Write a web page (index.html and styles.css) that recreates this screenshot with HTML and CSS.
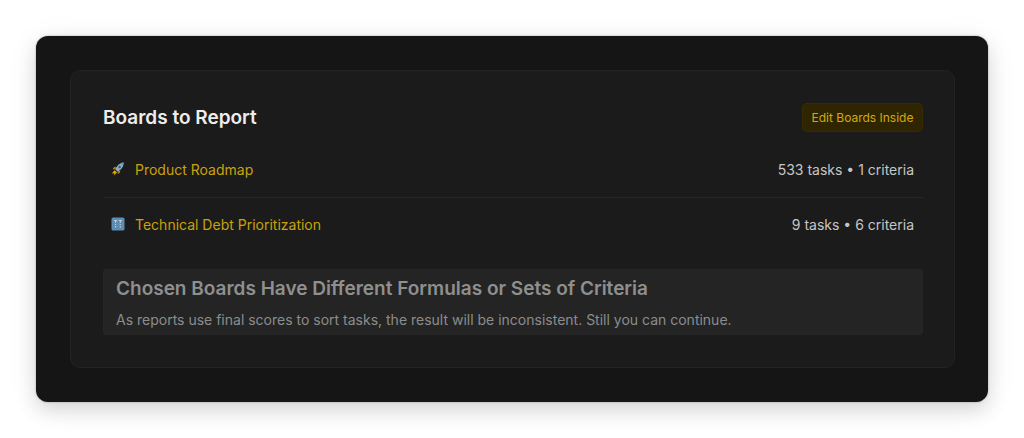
FILE: index.html
```html
<!DOCTYPE html>
<html lang="en">
<head>
<meta charset="utf-8">
<title>Boards to Report</title>
<link rel="stylesheet" href="styles.css">
</head>
<body>
<main class="window">
  <section class="card">
    <header class="card-head">
      <h2 class="card-title">Boards to Report</h2>
      <button class="edit-btn" type="button">Edit Boards Inside</button>
    </header>
    <ul class="boards">
      <li class="board">
        <span class="board-name">
          <svg class="board-icon" viewBox="0 0 16 16" aria-hidden="true">
            <path d="M13.6 1.6c-2.6.2-5 1.6-6.6 3.8L5 8l2.6 2.8 2.8-2c2.2-1.6 3.4-4.4 3.2-7.2z" fill="#8fa9bd"/>
            <path d="M13.6 1.6c-1 .1-2 .3-2.8.8l2 2.2c.6-.9.8-2 .8-3z" fill="#5f95c9"/>
            <circle cx="9.6" cy="6" r="1.2" fill="#2f5f8a"/>
            <path d="M6 5.6 3.6 6.4 2.8 8.4 5.2 8zM8 10.6l-.4 2.4 2-1 .8-2.4z" fill="#b98a14"/>
            <path d="M4.6 9.2 1.8 12.6l2.6-.4L3.8 14.6l3.2-3.2z" fill="#e0a818"/>
          </svg>
          <a class="board-link" href="#">Product Roadmap</a>
        </span>
        <span class="board-meta">533 tasks • 1 criteria</span>
      </li>
      <li class="board">
        <span class="board-name">
          <svg class="board-icon" viewBox="0 0 16 16" aria-hidden="true">
            <rect x="1.5" y="1.5" width="13" height="13" rx="1.6" fill="#5c8db5"/>
            <path d="M4 4h3.2v1H6.1v6.5H5V5H4zM8.8 4H12v1h-1.1v6.5H9.8V5h-1z" fill="#c3ccd4"/>
            <path d="M5 7.5h1.1M9.8 7.5h1.1M5 9.5h1.1M9.8 9.5h1.1" stroke="#44678a" stroke-width=".8"/>
          </svg>
          <a class="board-link" href="#">Technical Debt Prioritization</a>
        </span>
        <span class="board-meta">9 tasks • 6 criteria</span>
      </li>
    </ul>
    <aside class="notice">
      <h3 class="notice-title">Chosen Boards Have Different Formulas or Sets of Criteria</h3>
      <p class="notice-text">As reports use final scores to sort tasks, the result will be inconsistent. Still you can continue.</p>
    </aside>
  </section>
</main>
</body>
</html>
```
FILE: styles.css
```css
* { box-sizing: border-box; }
html, body { margin: 0; height: 100%; }
body {
  background: #fff;
  padding: 36px;
  font-family: Inter, "Liberation Sans", sans-serif;
  overflow: hidden;
}
.window {
  width: 952px;
  height: 366px;
  padding: 34px 33px 34px 34px;
  background: #151515;
  border-radius: 12px;
  box-shadow: 0 0 2px rgba(0,0,0,.35), 0 8px 20px rgba(0,0,0,.14), 0 4px 36px rgba(0,0,0,.05);
}
.card {
  height: 298px;
  padding: 32px 31px 32px 32px;
  background: #1b1b1b;
  border: 1px solid #232323;
  border-radius: 10px;
}
.card-head {
  display: flex;
  justify-content: space-between;
  align-items: center;
  height: 29px;
}
.card-title {
  margin: 0;
  font-size: 19px;
  font-weight: 600;
  line-height: 29px;
  color: #ededed;
}
.edit-btn {
  width: 121px;
  height: 29px;
  padding: 0;
  font: 400 12px/18px Inter, "Liberation Sans", sans-serif;
  color: #d2a90f;
  background: #2f2500;
  border: 1px dotted #3f3208;
  border-radius: 5px;
}
.boards {
  list-style: none;
  margin: 11px 0 0;
  padding: 0;
}
.board {
  display: flex;
  justify-content: space-between;
  align-items: center;
  height: 54px;
  padding: 0 9px 0 7px;
  font-size: 14px;
  line-height: 20px;
}
.board + .board { height: 54px; border-top: 1px solid #262626; }
.board-name {
  display: flex;
  align-items: center;
  gap: 9px;
}
.board-icon {
  display: block;
  width: 16px;
  height: 16px;
  margin-top: -2px;
}
.board-link {
  color: #c9a20c;
  text-decoration: none;
}
.board-meta { color: #c6c6c6; }
.notice {
  height: 66px;
  margin-top: 18px;
  padding: 7px 12px;
  background: #242424;
  border: 1px solid #262626;
  border-radius: 3px;
}
.notice-title {
  margin: 0;
  font-size: 19px;
  font-weight: 600;
  line-height: 24px;
  color: #8f8f8f;
}
.notice-text {
  margin: 9px 0 0;
  font-size: 14px;
  line-height: 20px;
  color: #8c8c8c;
}
```
